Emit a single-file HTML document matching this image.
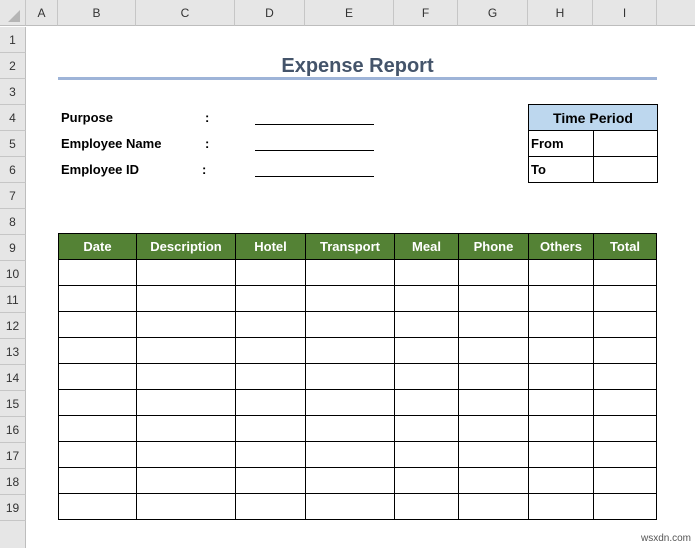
<!DOCTYPE html>
<html><head><meta charset="utf-8"><style>
*{margin:0;padding:0;box-sizing:border-box}
body{width:695px;height:548px;background:#fff;position:relative;overflow:hidden;font-family:"Liberation Sans",sans-serif}
.a{position:absolute}
.ch{position:absolute;top:0;height:26px;background:#e6e6e6;border-right:1px solid #c6c6c6;border-bottom:1px solid #bdbdbd;font-size:12px;color:#333;text-align:center;line-height:26px}
.rh{position:absolute;left:0;width:26px;height:26px;background:#e6e6e6;border-bottom:1px solid #c6c6c6;border-right:1px solid #bdbdbd;font-size:12px;color:#333;text-align:center;line-height:27px}
.lbl{position:absolute;font-size:13px;font-weight:bold;color:#000}
.ul{position:absolute;left:255px;width:119px;height:1px;background:#000}
table{border-collapse:collapse;position:absolute}
td{border:1px solid #000;padding:0}
</style></head><body>
<div class="ch" style="left:0;width:26px"></div>
<div class="a" style="left:8px;top:10px;width:0;height:0;border-left:12px solid transparent;border-bottom:12px solid #b5b5b5"></div>
<div class="ch" style="left:26px;width:32px">A</div>
<div class="ch" style="left:58px;width:78px">B</div>
<div class="ch" style="left:136px;width:99px">C</div>
<div class="ch" style="left:235px;width:70px">D</div>
<div class="ch" style="left:305px;width:89px">E</div>
<div class="ch" style="left:394px;width:64px">F</div>
<div class="ch" style="left:458px;width:70px">G</div>
<div class="ch" style="left:528px;width:65px">H</div>
<div class="ch" style="left:593px;width:64px">I</div>
<div class="ch" style="left:657px;width:40px;border-right:none"></div>
<div class="rh" style="top:27px">1</div><div class="rh" style="top:53px">2</div><div class="rh" style="top:79px">3</div><div class="rh" style="top:105px">4</div><div class="rh" style="top:131px">5</div><div class="rh" style="top:157px">6</div><div class="rh" style="top:183px">7</div><div class="rh" style="top:209px">8</div><div class="rh" style="top:235px">9</div><div class="rh" style="top:261px">10</div><div class="rh" style="top:287px">11</div><div class="rh" style="top:313px">12</div><div class="rh" style="top:339px">13</div><div class="rh" style="top:365px">14</div><div class="rh" style="top:391px">15</div><div class="rh" style="top:417px">16</div><div class="rh" style="top:443px">17</div><div class="rh" style="top:469px">18</div><div class="rh" style="top:495px">19</div>
<div class="rh" style="top:521px;height:27px;border-bottom:none"></div>

<div class="a" style="left:58px;width:599px;top:55px;text-align:center;font-size:20px;font-weight:bold;color:#44546a">Expense Report</div>
<div class="a" style="left:58px;width:599px;top:77px;height:3px;background:#9eb4d8"></div>

<div class="lbl" style="left:61px;top:110px">Purpose</div>
<div class="lbl" style="left:61px;top:136px">Employee Name</div>
<div class="lbl" style="left:61px;top:162px">Employee ID</div>
<div class="lbl" style="left:205px;top:110px">:</div>
<div class="lbl" style="left:205px;top:136px">:</div>
<div class="lbl" style="left:202px;top:162px">:</div>
<div class="ul" style="top:124px"></div><div class="ul" style="top:150px"></div><div class="ul" style="top:176px"></div>

<table style="left:528px;top:104px;font-size:13px;font-weight:bold">
<tr><td colspan="2" style="width:129px;height:26px;background:#bdd7ee;text-align:center;font-size:14px">Time Period</td></tr>
<tr><td style="width:64px;height:26px;padding-left:2px">From</td><td style="width:64px"></td></tr>
<tr><td style="height:26px;padding-left:2px">To</td><td></td></tr>
</table>

<table style="left:58px;top:233px">
<tr style="height:26px;background:#548235;color:#fff;font-weight:bold;font-size:13px;text-align:center">
<td style="width:78px">Date</td><td style="width:99px">Description</td><td style="width:70px">Hotel</td><td style="width:89px">Transport</td><td style="width:64px">Meal</td><td style="width:70px">Phone</td><td style="width:65px">Others</td><td style="width:63px">Total</td></tr>
<tr style="height:26px"><td></td><td></td><td></td><td></td><td></td><td></td><td></td><td></td></tr>
<tr style="height:26px"><td></td><td></td><td></td><td></td><td></td><td></td><td></td><td></td></tr>
<tr style="height:26px"><td></td><td></td><td></td><td></td><td></td><td></td><td></td><td></td></tr>
<tr style="height:26px"><td></td><td></td><td></td><td></td><td></td><td></td><td></td><td></td></tr>
<tr style="height:26px"><td></td><td></td><td></td><td></td><td></td><td></td><td></td><td></td></tr>
<tr style="height:26px"><td></td><td></td><td></td><td></td><td></td><td></td><td></td><td></td></tr>
<tr style="height:26px"><td></td><td></td><td></td><td></td><td></td><td></td><td></td><td></td></tr>
<tr style="height:26px"><td></td><td></td><td></td><td></td><td></td><td></td><td></td><td></td></tr>
<tr style="height:26px"><td></td><td></td><td></td><td></td><td></td><td></td><td></td><td></td></tr>
<tr style="height:26px"><td></td><td></td><td></td><td></td><td></td><td></td><td></td><td></td></tr>
</table>
<div class="a" style="right:4px;bottom:4px;font-size:10px;color:#555">wsxdn.com</div>
</body></html>
